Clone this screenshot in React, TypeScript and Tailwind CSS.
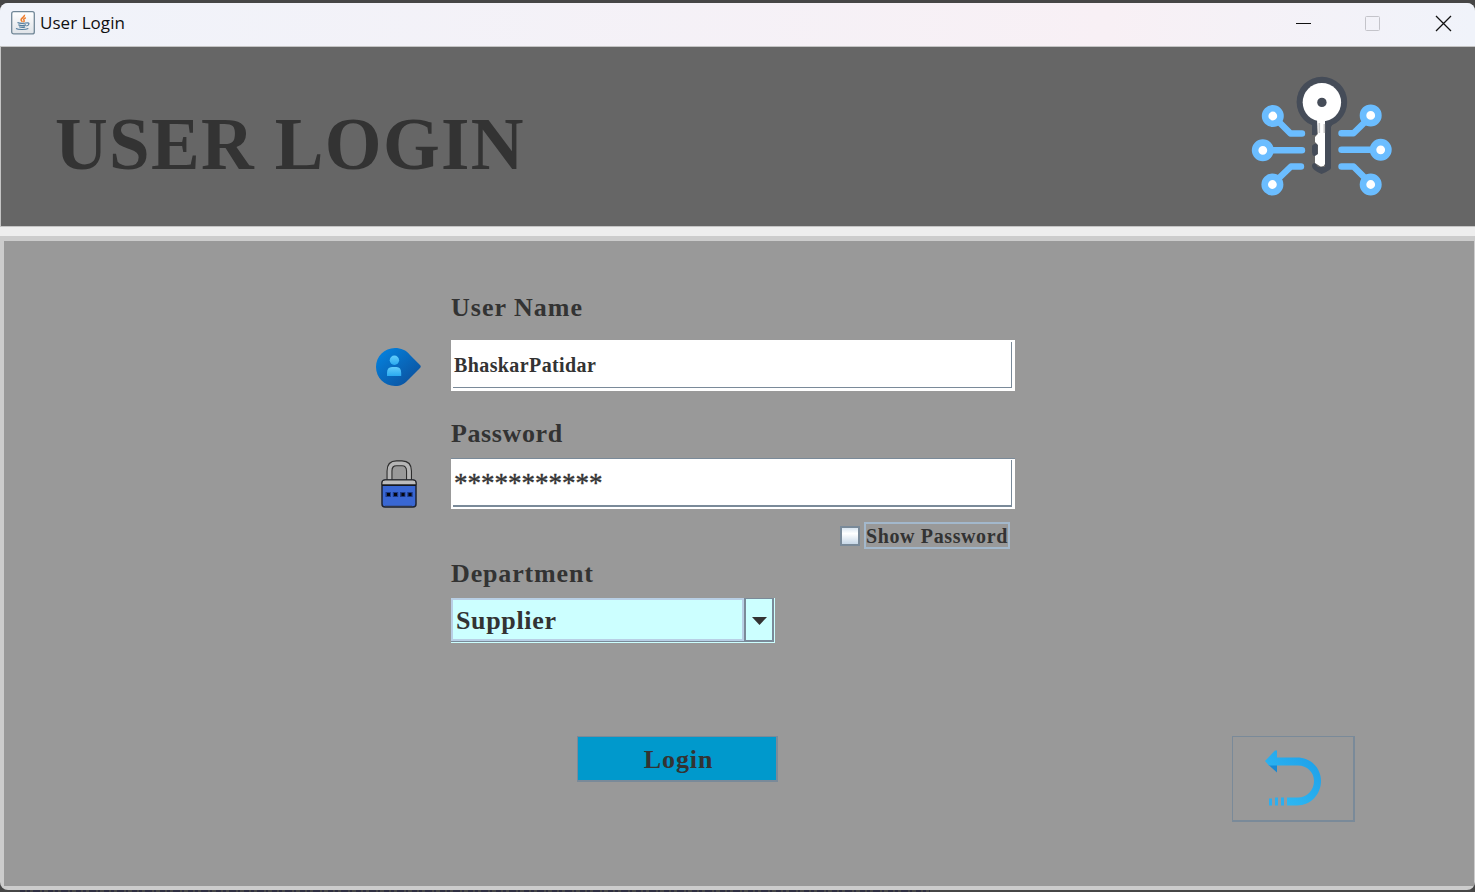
import React from "react";

const serif = "font-['Liberation_Serif',serif] font-bold text-[#333333] whitespace-nowrap";

function JavaIcon() {
  return (
    <svg width="24" height="24" viewBox="0 0 24 24">
      <defs>
        <linearGradient id="jbg" x1="0" y1="0" x2="0" y2="1">
          <stop offset="0" stopColor="#ffffff" />
          <stop offset="1" stopColor="#dfe3e8" />
        </linearGradient>
      </defs>
      <rect x="0.7" y="0.7" width="22.6" height="22.2" rx="2" fill="url(#jbg)" stroke="#718797" strokeWidth="1.3" />
      <path d="M13.5 3.8c.7 2.3-4.7 3.5-3.2 5.7.3.6.8 1 1.2 1.3M14.8 6.7c-2 .8-2.5 1.6-1.8 2.5.6.8.1 1.5-.6 2.1" fill="none" stroke="#ee7e2d" strokeWidth="1.5" />
      <path d="M6.5 11.5c2 1.2 7 1 9.2.2M7.3 13.8c2 1 5.5.9 7.8.1M8.2 15.8c2 .8 4.3.7 6 .1M15.8 12c3-.7 2.8 2.3-.4 3M5 17.5c2 1.300 9.500 1.400 12.300.1" fill="none" stroke="#527d9d" strokeWidth="1.15" />
    </svg>
  );
}

function KeyLogo() {
  return (
    <svg width="142" height="122" viewBox="1251 76 142 122" className="block">
      <g fill="none" stroke="#6bbdff" strokeWidth="6.4" strokeLinecap="round" strokeLinejoin="round">
        <path d="M1278 121L1290.5 133.5H1302" />
        <path d="M1269 150.3H1302" />
        <path d="M1278 179L1291 166.5H1301" />
        <path d="M1366 121L1353.5 133.3H1341.5" />
        <path d="M1374 149.8H1341.5" />
        <path d="M1366 179L1353.5 166.5H1341.5" />
      </g>
      <g fill="#ffffff" stroke="#6bbdff" strokeWidth="6.6">
        <circle cx="1272.8" cy="116" r="7.7" />
        <circle cx="1262.8" cy="150.3" r="7.7" />
        <circle cx="1272.4" cy="184.5" r="7.7" />
        <circle cx="1370.7" cy="115.4" r="7.7" />
        <circle cx="1380.7" cy="149.8" r="7.7" />
        <circle cx="1370.7" cy="184.5" r="7.7" />
      </g>
      <circle cx="1321.9" cy="102" r="25.3" fill="#454c58" />
      <path d="M1312 122L1316 128V135H1312V131ZM1322 122H1334L1331 127V168Q1331 170 1321.5 174Q1312 170 1312 166Q1312 163 1315 163L1318 167H1325V122Z" fill="#454c58" />
      <path d="M1312 122L1317 124V134Q1314 136.5 1312 133.5ZM1312 146Q1313 143.5 1317.5 143.5V156H1314Q1312 155 1312 152Z" fill="#454c58" />
      <path d="M1317 120H1325V164Q1324 167 1320.5 166.5L1315 163V156L1318 154V145L1315 142V137L1317.8 134Z" fill="#ffffff" />
      <path d="M1319.3 123V133M1324.3 124V133" stroke="#c9c9c9" strokeWidth="1.6" />
      <circle cx="1321.9" cy="102.3" r="19.2" fill="#ffffff" />
      <circle cx="1321.9" cy="102.4" r="4.7" fill="#454c58" />
    </svg>
  );
}

function UserIcon() {
  return (
    <svg width="45" height="38" viewBox="0 0 45 38" className="block">
      <defs>
        <linearGradient id="ub" x1="0" y1="0" x2="1" y2="1">
          <stop offset="0.1" stopColor="#0480dc" />
          <stop offset="0.8" stopColor="#0b57a5" />
        </linearGradient>
        <linearGradient id="up" x1="0" y1="0" x2="0" y2="1">
          <stop offset="0" stopColor="#62cdfb" />
          <stop offset="1" stopColor="#2aaaf0" />
        </linearGradient>
      </defs>
      <path d="M19 0C8.5 0 0 8.5 0 19S8.5 38 19 38C25 38 28 36 32 32L44 20Q45.5 18.5 44 17L34 7C30 2 25 0 19 0Z" fill="url(#ub)" />
      <circle cx="18.4" cy="12.3" r="4.7" fill="url(#up)" />
      <path d="M11 28V25Q11 19 16 19H20.500Q25.200 19 25.200 25V28Z" fill="url(#up)" />
    </svg>
  );
}

function LockIcon() {
  return (
    <svg width="36" height="49" viewBox="0 0 36 49" className="block">
      <path d="M8.500 22V11Q8.500 3.300 15.500 3.300H21Q28 3.300 28 11V22" fill="none" stroke="#2d2d2d" strokeWidth="6" />
      <path d="M8.500 22V11Q8.500 3.300 15.500 3.300H21Q28 3.300 28 11V22" fill="none" stroke="#b5b5b5" strokeWidth="3.800" />
      <rect x="1" y="20" width="34" height="27" rx="3" fill="#3967d3" stroke="#1e2330" strokeWidth="1.500" />
      <path d="M1 25V23Q1 20 4 20H32Q35 20 35 23V25Z" fill="#bcbcbc" stroke="#2d2d2d" />
      <path d="M1 25.300H35" stroke="#17191f" strokeWidth="1.500" />
      <path d="M4 46.500H31" stroke="#303646" strokeWidth="1.500" />
      <g fill="#1c3987">
        <rect x="4.500" y="32" width="5.400" height="5" />
        <rect x="11.800" y="32" width="5.400" height="5" />
        <rect x="19" y="32" width="5.400" height="5" />
        <rect x="26.300" y="32" width="5.400" height="5" />
      </g>
      <path d="M6 34.500H9M13 34.500H16M20.500 34.500H23.500M27.500 34.500H30.500" stroke="#06080f" strokeWidth="3" />
    </svg>
  );
}

function BackIcon() {
  return (
    <svg width="57" height="56" viewBox="0 0 57 56" className="block">
      <defs>
        <linearGradient id="bk" x1="0" y1="1" x2="1" y2="0">
          <stop offset="0" stopColor="#33bef5" />
          <stop offset="1" stopColor="#1b9de8" />
        </linearGradient>
      </defs>
      <path d="M3 14.500H12V22.500Z" fill="#1689d5" />
      <path d="M0 11L10 .5H12V7.500H32C46 7.500 56 18 56 31S46 55.500 32 55.500H22V47.500H33C42 47.500 49 40 49 31S42 15.500 33 15.500H4Z" fill="url(#bk)" />
      <path d="M4 48.500H7V55.500H4ZM10 47.500H13V55.500H10ZM16 47.500H19V55.500H16Z" fill="#2caff0" />
    </svg>
  );
}

export default function App() {
  return (
    <div className="flex h-[892px] w-[1475px] flex-col overflow-hidden bg-[#464646] pt-[3px]">
      <div className="flex h-[887px] flex-col overflow-hidden rounded-[8px] bg-[#cccccc]">
        <header className="flex h-[43px] shrink-0 items-center bg-linear-to-r from-[#f0f3fa] via-[#f8f0f5] via-75% to-[#f0f3fa] pb-[4px] pl-[11px]">
          <JavaIcon />
          <span className="ml-[5px] mt-px font-['Open_Sans',sans-serif] text-[17px] leading-6 tracking-[0.05px] text-[#101010]">User Login</span>
          <svg width="160" height="20" viewBox="1292 13 160 20" className="mr-[23px] ml-auto block">
            <path d="M1296 23.500H1311" stroke="#111" />
            <rect x="1365.500" y="16.500" width="14" height="14" rx="1" fill="none" stroke="#c4c4ca" />
            <path d="M1436 16L1451 31M1451 16L1436 31" stroke="#111" strokeWidth="1.300" />
          </svg>
        </header>
        <div className="flex h-[181px] shrink-0 items-start justify-between border-y border-l border-[#c4c4c4] bg-[#666666] pt-[29px] pr-[82px] pl-[54px]">
          <h1 className={`${serif} mt-[27px] text-[73px] leading-[84px] tracking-[1.35px]`}>USER LOGIN</h1>
          <KeyLogo />
        </div>
        <div className="h-[9px] shrink-0 bg-[#eeeeee]" />
        <main className="mt-[5px] mr-[1px] mb-[4px] ml-[4px] flex min-h-0 flex-1 items-start bg-[#999999]">
          <div className="flex w-[447px] shrink-0 flex-col pl-[372px]">
            <div className="mt-[107px]"><UserIcon /></div>
            <div className="mt-[74px] ml-[5px]"><LockIcon /></div>
          </div>
          <section className="flex w-[564px] shrink-0 flex-col items-start">
            <label className={`${serif} mt-[52px] text-[26px] leading-[30px] tracking-[1px]`}>User Name</label>
            <div className="mt-[17px] h-[51px] w-[564px] bg-white p-[2px]">
              <div className="flex h-[46px] w-[559px] items-center border-r border-b border-[#7a8a99] pl-px">
                <span className={`${serif} text-[20px] leading-6 tracking-[0.4px]`}>BhaskarPatidar</span>
              </div>
            </div>
            <label className={`${serif} mt-[28px] text-[26px] leading-[30px] tracking-[0.6px]`}>Password</label>
            <div className="mt-[9px] h-[51px] w-[564px] border-t border-[#7a8a99] bg-white p-[2px] pt-px">
              <div className="flex h-[47px] w-[559px] items-start border-r border-b-2 border-[#7a8a99] pt-[8px] pl-px">
                <span className={`${serif} text-[27px] leading-[30px] font-normal [-webkit-text-stroke:0.4px_#333333]`}>***********</span>
              </div>
            </div>
            <div className="mt-[13px] mr-[5px] flex items-center gap-[4px] self-end">
              <div className="size-[20px] border-2 border-[#7a8a99] bg-linear-to-b from-[#dbe7f1] via-white via-35% to-[#c6d7e7]" />
              <div className="flex h-[27px] w-[146px] items-center border-2 border-[#a3b8cc]">
                <span className={`${serif} text-[20px] leading-6 tracking-[0.62px]`}>Show Password</span>
              </div>
            </div>
            <label className={`${serif} mt-[10px] text-[26px] leading-[30px] tracking-[0.85px]`}>Department</label>
            <div className="mt-[9px] flex h-[45px] w-[324px] flex-col border-r border-b border-[#ccffff] bg-[#ccffff]">
              <div className="flex h-[44px] w-[323px] border-b border-[#7a8a99]">
                <div className="flex w-[293px] items-center border-2 border-[#b8cfe5] pt-[2px] pl-[3px]">
                  <span className={`${serif} text-[26px] leading-[30px] tracking-[0.65px]`}>Supplier</span>
                </div>
                <div className="flex w-[30px] items-center justify-center border-2 border-t border-b border-[#7a8a99] pt-[2px]">
                  <svg width="15" height="8" viewBox="0 0 15 8"><path d="M0 0H15L7.500 8Z" fill="#333" /></svg>
                </div>
              </div>
            </div>
            <button className={`${serif} mt-[93px] ml-[126px] flex h-[46px] w-[201px] items-center justify-center border border-r-2 border-b-2 border-[#7a8a99] bg-[#0099cc] pt-[2px] pl-[3px] text-[26px] tracking-[0.9px]`}>Login</button>
          </section>
          <button className="mt-[495px] ml-[217px] flex h-[86px] w-[123px] items-start border border-r-2 border-b-2 border-[#7a8a99] pt-[13px] pl-[32px]">
            <BackIcon />
          </button>
        </main>
      </div>
      <svg width="1475" height="2" className="block shrink-0">
        <path d="M20 1H930" stroke="#292840" strokeWidth="1.500" strokeDasharray="5 2 3 3 7 2 2 4" />
      </svg>
    </div>
  );
}
